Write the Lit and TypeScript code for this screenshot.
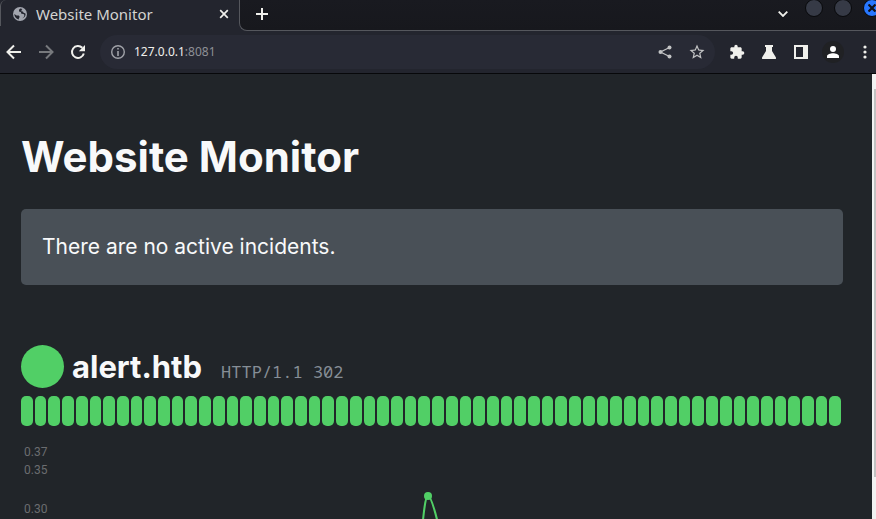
import { LitElement, html, css, svg } from "lit";
import { customElement, property } from "lit/decorators.js";

@customElement("browser-chrome")
class BrowserChrome extends LitElement {
  @property() pageTitle = "";

  static styles = css`
    :host {
      display: block;
      font-family: "Noto Sans", sans-serif;
      color: #d4d4d1;
    }
    button {
      display: grid;
      place-items: center;
      flex: none;
      margin: 0;
      padding: 0;
      border: 0;
      background: none;
      color: #f0f0ec;
    }
    svg {
      display: block;
    }
    .strip {
      display: flex;
      height: 31px;
      background: #23252e;
    }
    .lead {
      width: 6px;
      height: 26px;
      flex: none;
      box-sizing: border-box;
      border-left: 1px solid #55575d;
      border-top-left-radius: 6px;
    }
    .tab {
      display: flex;
      align-items: center;
      box-sizing: border-box;
      width: 233px;
      height: 31px;
      flex: none;
      padding: 0 9px 3px 6px;
    }
    .tab .name {
      flex: 1;
      margin-left: 8px;
      font-size: 15px;
      line-height: 20px;
      white-space: nowrap;
    }
    .tab button {
      width: 12px;
      height: 16px;
    }
    .rest {
      display: flex;
      flex: 1;
      min-width: 0;
      border-left: 1px solid #55575d;
      border-bottom: 1px solid #55575d;
      border-bottom-left-radius: 8px;
      background: linear-gradient(#191a20, #17181d);
    }
    .new {
      width: 44px;
      height: 28px;
    }
    .space {
      flex: 1;
    }
    .down {
      width: 16px;
      height: 28px;
      margin-right: 14px;
    }
    .win {
      box-sizing: border-box;
      width: 18px;
      height: 18px;
      margin: -1px 11px 0 0;
      border: 1px solid #08090b;
      border-radius: 50%;
      background: #363a46;
    }
    .win.close {
      margin-right: -5px;
      background: #2777ff;
      color: #101218;
    }
    .bar {
      display: flex;
      align-items: center;
      box-sizing: border-box;
      height: 43px;
      padding-left: 6px;
      border-bottom: 1px solid #07080a;
      background: #23252e;
    }
    .bar > button {
      width: 32px;
      height: 32px;
    }
    .bar > button.nav {
      width: 16px;
      margin-right: 16px;
    }
    .bar > button.last {
      width: 32px;
      margin-right: -5px;
    }
    .bar > button.dim {
      color: #77797d;
    }
    .bar > button.avatar {
      width: 22px;
      height: 22px;
      margin: 0 5px;
      border-radius: 50%;
      background: #202124;
    }
    .omni {
      display: flex;
      align-items: center;
      flex: 1;
      min-width: 0;
      height: 34px;
      margin: 0 6px 0 -2px;
      border-radius: 17px;
      background: #282a35;
    }
    .info {
      width: 16px;
      height: 16px;
      margin: 0 8px 0 10px;
      color: #a0a2a8;
    }
    .field {
      position: relative;
      flex: 1;
      min-width: 0;
      font-size: 12px;
      line-height: 20px;
    }
    .field input {
      width: 100%;
      height: 20px;
      box-sizing: border-box;
      margin: 0;
      padding: 0;
      border: 0;
      outline: 0;
      background: none;
      font: inherit;
      color: transparent;
      display: block;
    }
    .shown {
      position: absolute;
      inset: 0;
      pointer-events: none;
      color: #8e9096;
    }
    .shown b {
      font-weight: 400;
      color: #f0f0ec;
    }
    .omni .act {
      width: 32px;
      height: 32px;
      color: #c3c4c5;
    }
    .omni .act.star {
      margin-right: 2px;
    }
  `;

  private icon(d: string, size = 18) {
    return html`<svg width=${size} height=${size} viewBox="0 0 24 24" fill="currentColor" aria-hidden="true">
      ${svg`<path d=${d} />`}
    </svg>`;
  }

  render() {
    return html`
      <div class="strip">
        <div class="lead"></div>
        <div class="tab">
          <svg width="16" height="16" viewBox="0 0 16 16" aria-hidden="true">
            <circle cx="8" cy="8" r="7" fill="#a2a5ae" />
            <path d="M8.400 2.500 7 3.800v1.700l1.800.6.6 1.700 2.100.1.900 1.100-.5 1.700-1.700 1.800q2.600-.8 3.400-3.600L13.300 7.300l-1.500-.4-.9-1.500H9.500V4L10.400 2.900zM2.300 8q.2 4.200 4.600 5.500V12l.9-1.100-1-1.300-2.200-.1z" fill="#23252e" />
          </svg>
          <span class="name">${this.pageTitle}</span>
          <button aria-label="Close tab">
            <svg width="10" height="10" viewBox="0 0 10 10" stroke="currentColor" stroke-width="1.700"><path d="M1.200 1.200l7.600 7.600M8.800 1.200 1.200 8.800" /></svg>
          </button>
        </div>
        <div class="rest">
          <button class="new" aria-label="New tab">
            <svg width="12" height="12" viewBox="0 0 12 12" stroke="currentColor" stroke-width="2"><path d="M6 0v12M0 6h12" /></svg>
          </button>
          <div class="space"></div>
          <button class="down" aria-label="Search tabs">
            <svg width="10" height="6" viewBox="0 0 10 6" fill="none" stroke="currentColor" stroke-width="1.800"><path d="M.7.7 5 5 9.300.7" /></svg>
          </button>
          <button class="win" aria-label="Minimize"></button>
          <button class="win" aria-label="Maximize"></button>
          <button class="win close" aria-label="Close window">
            <svg width="8" height="8" viewBox="0 0 8 8" stroke="currentColor" stroke-width="2.200"><path d="M.5.5l7 7M7.500.5l-7 7" /></svg>
          </button>
        </div>
      </div>
      <div class="bar">
        <button class="nav" aria-label="Back">
          <svg width="16" height="16" viewBox="0 0 16 16" fill="none" stroke="currentColor" stroke-width="2"><path d="M15 8H2.500M8 1.500 1.500 8 8 14.500" /></svg>
        </button>
        <button class="nav dim" aria-label="Forward">
          <svg width="16" height="16" viewBox="0 0 16 16" fill="none" stroke="currentColor" stroke-width="2"><path d="M1 8h12.500M8 1.500 14.500 8 8 14.500" /></svg>
        </button>
        <button class="nav" aria-label="Reload">
          <svg width="16" height="16" viewBox="0 0 16 16"><path d="M13.800 9.500A6 6 0 1 1 12.300 3.800" fill="none" stroke="currentColor" stroke-width="2" /><path d="M15 1v6.200H8.800z" fill="currentColor" /></svg>
        </button>
        <div class="omni">
          <button class="info" aria-label="Site information">
            <svg width="16" height="16" viewBox="0 0 16 16"><circle cx="8" cy="8" r="6.300" fill="none" stroke="currentColor" stroke-width="1.400" /><path d="M7.200 7h1.600v5H7.200zM7.200 4h1.600v1.600H7.200z" fill="currentColor" /></svg>
          </button>
          <div class="field">
            <input aria-label="Address" .value=${"127.0.0.1:8081"} />
            <div class="shown" aria-hidden="true"><b>127.0.0.1</b>:8081</div>
          </div>
          <button class="act" aria-label="Share">
            <svg width="16" height="16" viewBox="0 0 16 16"><path d="M12.500 3.500 3.500 8l9 4.500" fill="none" stroke="currentColor" stroke-width="1.300" /><circle cx="12.500" cy="3.500" r="2" fill="currentColor" /><circle cx="3.500" cy="8" r="2" fill="currentColor" /><circle cx="12.500" cy="12.500" r="2" fill="currentColor" /></svg>
          </button>
          <button class="act star" aria-label="Bookmark">
            ${this.icon("M22 9.240l-7.190-.62L12 2 9.190 8.630 2 9.240l5.460 4.730L5.820 21 12 17.270 18.180 21l-1.630-7.030L22 9.240zM12 15.400l-3.760 2.270 1-4.280-3.320-2.880 4.380-.38L12 6.100l1.710 4.040 4.380.38-3.320 2.880 1 4.280L12 15.400z", 18)}
          </button>
        </div>
        <button aria-label="Extensions">
          ${this.icon("M20.500 11H19V7c0-1.100-.9-2-2-2h-4V3.500a2.500 2.500 0 0 0-5 0V5H4c-1.100 0-2 .9-2 2v3.800h1.500a2.700 2.700 0 0 1 0 5.400H2V20c0 1.100.9 2 2 2h3.800v-1.500a2.700 2.700 0 0 1 5.400 0V22H17c1.100 0 2-.9 2-2v-4h1.500a2.500 2.500 0 0 0 0-5z", 16)}
        </button>
        <button aria-label="Labs">
          <svg width="14" height="14" viewBox="0 0 14 14" fill="currentColor"><path d="M3 0h8v2h-1v4l3.800 6.200Q14.500 14 13 14H1Q-.5 14 .2 12.200L4 6V2H3z" /></svg>
        </button>
        <button aria-label="Side panel">
          <svg width="14" height="14" viewBox="0 0 14 14"><path fill="currentColor" fill-rule="evenodd" d="M0 0h14v14H0zM2 2v10h7V2z" /></svg>
        </button>
        <button class="avatar" aria-label="Profile">
          <svg width="12" height="12" viewBox="0 0 12 12" fill="#fff"><circle cx="6" cy="3" r="3" /><path d="M0 12v-1.800C0 8.200 3.500 7.200 6 7.200s6 1 6 3V12z" /></svg>
        </button>
        <button class="last" aria-label="Menu">
          <svg width="4" height="14" viewBox="0 0 4 14" fill="currentColor"><circle cx="2" cy="2" r="1.600" /><circle cx="2" cy="7" r="1.600" /><circle cx="2" cy="12" r="1.600" /></svg>
        </button>
      </div>
    `;
  }
}

@customElement("site-status")
class SiteStatus extends LitElement {
  @property() site = "";
  @property() response = "";

  static styles = css`
    :host {
      display: block;
    }
    .head {
      display: flex;
      align-items: center;
      gap: 8px;
      height: 43px;
    }
    .dot {
      width: 43px;
      height: 43px;
      border-radius: 50%;
      background: #51cf66;
    }
    .label {
      display: flex;
      align-items: baseline;
      gap: 19px;
    }
    h2 {
      margin: 0;
      font-size: 31px;
      line-height: 42px;
      font-weight: 700;
    }
    code {
      font-family: "Noto Sans Mono", "DejaVu Sans Mono", monospace;
      font-size: 17px;
      line-height: 20px;
      color: #868e96;
    }
    .history {
      display: flex;
      margin-top: 8px;
      height: 30px;
    }
    .tick {
      flex: 1;
      margin-right: 2px;
      border-radius: 5px;
      background: #51cf66;
    }
    .chart {
      display: block;
      width: 100%;
      height: 200px;
      margin-top: 13px;
      overflow: visible;
    }
    .chart text {
      font-family: "Roboto", sans-serif;
      font-size: 12px;
      fill: #6b6d70;
    }
  `;

  render() {
    return html`
      <div class="head">
        <span class="dot"></span>
        <div class="label">
          <h2>${this.site}</h2>
          <code>${this.response}</code>
        </div>
      </div>
      <div class="history">${Array.from({ length: 60 }, () => html`<span class="tick"></span>`)}</div>
      <svg class="chart" role="img" aria-label="Response time">
        <text x="3" y="17">0.37</text>
        <text x="3" y="35">0.35</text>
        <text x="3" y="74">0.30</text>
        <path d="M394 150C401 110 402 57 407 57S421 100 431 150" fill="none" stroke="#51cf66" stroke-width="2" />
        <circle cx="407" cy="57" r="4" fill="#51cf66" />
      </svg>
    `;
  }
}

@customElement("app-root")
class AppRoot extends LitElement {
  static styles = css`
    :host {
      display: flex;
      flex-direction: column;
      height: 100vh;
      overflow: hidden;
      background: #212529;
    }
    browser-chrome {
      flex: none;
    }
    .view {
      display: flex;
      flex: 1;
      min-height: 0;
    }
    main {
      flex: 1;
      min-width: 0;
      overflow: hidden;
      padding: 56px 29px 0 21px;
      font-family: "Inter", sans-serif;
      color: #f8f9fa;
    }
    h1 {
      margin: 0;
      font-size: 42px;
      line-height: 53px;
      font-weight: 700;
    }
    .notice {
      margin: 26px 0 60px;
      padding: 21px;
      border-radius: 5px;
      background: #495057;
      font-size: 21px;
      line-height: 34px;
    }
    .scroll {
      width: 4px;
      padding: 15px 0 0 2px;
      box-sizing: border-box;
      background: #f1f1f1;
    }
    .thumb {
      height: 388px;
      background: #c1c1c1;
    }
  `;

  render() {
    return html`
      <browser-chrome .pageTitle=${"Website Monitor"}></browser-chrome>
      <div class="view">
        <main>
          <h1>Website Monitor</h1>
          <div class="notice">There are no active incidents.</div>
          <site-status site="alert.htb" response="HTTP/1.1 302"></site-status>
        </main>
        <div class="scroll"><div class="thumb"></div></div>
      </div>
    `;
  }
}
